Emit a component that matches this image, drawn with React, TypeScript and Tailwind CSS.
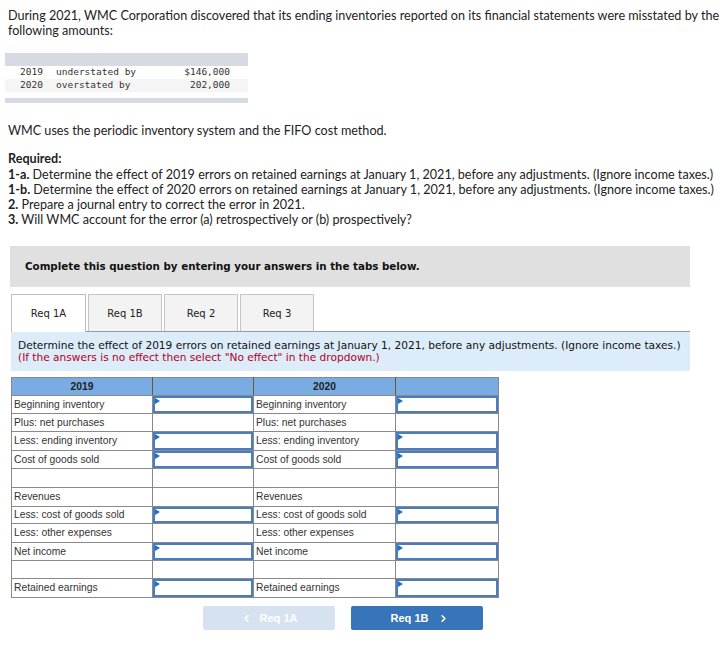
import React from "react";
import { ChevronLeft, ChevronRight } from "lucide-react";

type Row = { h: string; l1: string; in1: boolean; l2: string; in2: boolean };

const rows: Row[] = [
  { h: "h-[18px]", l1: "Beginning inventory", in1: true, l2: "Beginning inventory", in2: true },
  { h: "h-[18px]", l1: "Plus: net purchases", in1: false, l2: "Plus: net purchases", in2: false },
  { h: "h-[19px]", l1: "Less: ending inventory", in1: true, l2: "Less: ending inventory", in2: true },
  { h: "h-[18px]", l1: "Cost of goods sold", in1: true, l2: "Cost of goods sold", in2: true },
  { h: "h-[19px]", l1: "", in1: false, l2: "", in2: false },
  { h: "h-[19px]", l1: "Revenues", in1: false, l2: "Revenues", in2: false },
  { h: "h-[17px]", l1: "Less: cost of goods sold", in1: true, l2: "Less: cost of goods sold", in2: true },
  { h: "h-[19px]", l1: "Less: other expenses", in1: false, l2: "Less: other expenses", in2: false },
  { h: "h-[18px]", l1: "Net income", in1: true, l2: "Net income", in2: true },
  { h: "h-[18px]", l1: "", in1: false, l2: "", in2: false },
  { h: "h-[19px]", l1: "Retained earnings", in1: true, l2: "Retained earnings", in2: true },
];

function InputCell({ on }: { on: boolean }) {
  return (
    <td className="border border-[#8a8a8a] p-0 relative">
      {on && (
        <div className="absolute inset-[0px] border-2 border-[#4a7dbf] bg-white">
          <div className="absolute left-0 top-0 w-0 h-0 border-t-[3px] border-b-[3px] border-l-[5px] border-t-transparent border-b-transparent border-l-[#1f6fc8]" />
        </div>
      )}
    </td>
  );
}

function LabelCell({ t }: { t: string }) {
  return (
    <td className="border border-[#8a8a8a] px-[2px] py-0 text-[10.3px] text-[#333] leading-[12px] whitespace-nowrap align-middle">
      {t}
    </td>
  );
}

export default function App() {
  const body = { fontFamily: "Lato, 'Open Sans', sans-serif" };
  return (
    <div className="w-[727px] h-[646px] bg-white overflow-hidden relative">
      <div className="pl-[8px] pr-[2px] pt-[8px] text-[12.6px] leading-[15px] text-[#222]" style={body}>
        <p>
          During 2021, WMC Corporation discovered that its ending inventories reported on its financial statements were misstated by the following amounts:
        </p>
      </div>

      <div className="ml-[5px] mt-[15px] w-[243px]" style={{ fontFamily: "'DejaVu Sans Mono', monospace" }}>
        <div className="h-[13px] bg-[#d6dae2]" />
        <div className="flex h-[13px] items-center bg-white text-[9.5px] text-[#333]">
          <span className="ml-[15px] w-[36px]">2019</span>
          <span className="w-[116px]">understated by</span>
          <span className="w-[58px] text-right">$146,000</span>
        </div>
        <div className="flex h-[13px] items-center bg-[#f5f5f5] text-[9.5px] text-[#333]">
          <span className="ml-[15px] w-[36px]">2020</span>
          <span className="w-[116px]">overstated by</span>
          <span className="w-[58px] text-right">202,000</span>
        </div>
        <div className="h-[5px] mt-[6px] bg-[#d6dae2]" />
      </div>

      <div className="pl-[8px] pr-[2px] text-[12.6px] leading-[15px] text-[#222] whitespace-nowrap" style={body}>
        <p className="mt-[20px]">WMC uses the periodic inventory system and the FIFO cost method.</p>
        <p className="mt-[13px] font-bold">Required:</p>
        <p className="mt-[1px]">
          <b>1-a.</b> Determine the effect of 2019 errors on retained earnings at January 1, 2021, before any adjustments. (Ignore income taxes.)
        </p>
        <p>
          <b>1-b.</b> Determine the effect of 2020 errors on retained earnings at January 1, 2021, before any adjustments. (Ignore income taxes.)
        </p>
        <p>
          <b>2.</b> Prepare a journal entry to correct the error in 2021.
        </p>
        <p>
          <b>3.</b> Will WMC account for the error (a) retrospectively or (b) prospectively?
        </p>
      </div>

      <div className="ml-[10px] mt-[19px] w-[680px]" style={{ fontFamily: "'DejaVu Sans', Verdana, sans-serif" }}>
        <div className="h-[41px] bg-[#e0e0e0] flex items-center pl-[15px] text-[10.3px] font-bold text-[#111]">
          Complete this question by entering your answers in the tabs below.
        </div>

        <div className="mt-[7px] ml-[1px] flex gap-[2px] items-end">
          <div className="w-[75px] h-[38px] bg-white border border-b-0 border-[#bdbdbd] flex items-center justify-center text-[10px] text-[#222] relative z-10 -mb-[1px]">
            Req 1A
          </div>
          <div className="w-[74px] h-[37px] bg-[#f3f3f3] border border-b-0 border-[#c6c6c6] flex items-center justify-center text-[10px] text-[#222]">
            Req 1B
          </div>
          <div className="w-[74px] h-[37px] bg-[#f3f3f3] border border-b-0 border-[#c6c6c6] flex items-center justify-center text-[10px] text-[#222]">
            Req 2
          </div>
          <div className="w-[74px] h-[37px] bg-[#f3f3f3] border border-b-0 border-[#c6c6c6] flex items-center justify-center text-[10px] text-[#222]">
            Req 3
          </div>
        </div>

        <div className="ml-[1px] border-t border-[#9a9a9a] bg-[#dcecf9] h-[40px] pl-[7px] pt-[8px] text-[10.6px] leading-[11.5px] whitespace-nowrap">
          <div className="text-[#111]">
            Determine the effect of 2019 errors on retained earnings at January 1, 2021, before any adjustments. (Ignore income taxes.)
          </div>
          <div className="text-[#b3001b]">(If the answers is no effect then select "No effect" in the dropdown.)</div>
        </div>
      </div>

      <table
        className="ml-[11px] mt-[6px] border-collapse table-fixed"
        style={{ fontFamily: "'Liberation Sans', Arial, sans-serif", width: 487 }}
      >
        <colgroup>
          <col className="w-[141px]" />
          <col className="w-[101px]" />
          <col className="w-[142px]" />
          <col className="w-[103px]" />
        </colgroup>
        <tbody>
          <tr className="h-[18px] bg-[#78ace3]">
            <td className="border border-[#8a8a8a] border-r-[#6b5a2a] text-center text-[10.3px] font-bold text-[#222]">2019</td>
            <td className="border border-[#8a8a8a] border-r-[#6b5a2a]" />
            <td className="border border-[#8a8a8a] border-r-[#6b5a2a] text-center text-[10.3px] font-bold text-[#222]">2020</td>
            <td className="border border-[#8a8a8a]" />
          </tr>
          {rows.map((r, i) => (
            <tr key={i} className={r.h}>
              <LabelCell t={r.l1} />
              <InputCell on={r.in1} />
              <LabelCell t={r.l2} />
              <InputCell on={r.in2} />
            </tr>
          ))}
        </tbody>
      </table>

      <div className="ml-[203px] mt-[8px] flex gap-[16px]" style={{ fontFamily: "'Liberation Sans', Arial, sans-serif" }}>
        <div className="w-[132px] h-[24px] rounded-[2px] bg-[#d6e2f0] flex items-center justify-center text-white text-[11px] font-bold gap-[8px]">
          <ChevronLeft size={11} strokeWidth={3.5} />
          <span>Req 1A</span>
        </div>
        <div className="w-[132px] h-[24px] rounded-[2px] bg-[#3874b9] flex items-center justify-center text-white text-[11px] font-bold gap-[10px] pl-[6px]">
          <span>Req 1B</span>
          <ChevronRight size={11} strokeWidth={3.5} />
        </div>
      </div>
    </div>
  );
}
